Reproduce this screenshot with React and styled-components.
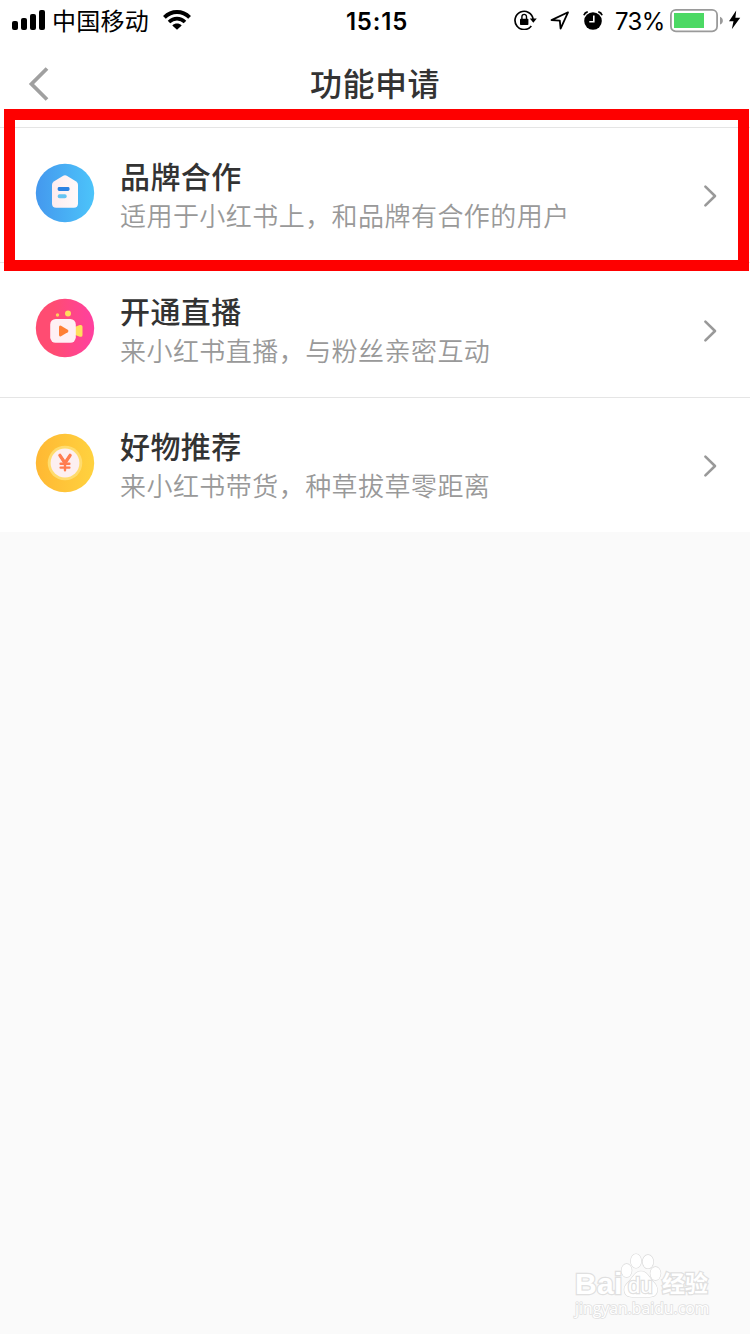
import React from 'react'
import styled, { createGlobalStyle } from 'styled-components'

const features = [
  {
    id: 'brand',
    title: '品牌合作',
    desc: '适用于小红书上，和品牌有合作的用户',
    icon: <BrandIcon />,
  },
  {
    id: 'live',
    title: '开通直播',
    desc: '来小红书直播，与粉丝亲密互动',
    icon: <LiveIcon />,
  },
  {
    id: 'goods',
    title: '好物推荐',
    desc: '来小红书带货，种草拔草零距离',
    icon: <GoodsIcon />,
  },
]

function App() {
  return (
    <Page>
      <GlobalStyle />
      <StatusBar />
      <NavBar>
        <BackButton aria-label='back'>
          <svg width='22' height='36' viewBox='0 0 22 36' fill='none'>
            <path d='M19 2.5L3.5 18L19 33.5' stroke='#a0a0a0' strokeWidth='3.8' />
          </svg>
        </BackButton>
        <NavTitle>功能申请</NavTitle>
      </NavBar>
      <List>
        {features.map((item) => (
          <Row key={item.id}>
            {item.icon}
            <RowText>
              <RowTitle>{item.title}</RowTitle>
              <RowDesc>{item.desc}</RowDesc>
            </RowText>
            <svg width='16' height='24' viewBox='0 0 16 24' fill='none'>
              <path
                d='M3.4 2.6L13 12L3.4 21.4'
                stroke='#999'
                strokeWidth='2.6'
                strokeLinecap='round'
                strokeLinejoin='round'
              />
            </svg>
          </Row>
        ))}
      </List>
      <Highlight />
      <Watermark />
    </Page>
  )
}

export default App

function StatusBar() {
  return (
    <Status>
      <StatusLeft>
        <svg width='33' height='20' viewBox='0 0 33 20'>
          <rect x='0' y='11' width='6' height='9' rx='2' />
          <rect x='9' y='8' width='6' height='12' rx='2' />
          <rect x='18' y='4' width='6' height='16' rx='2' />
          <rect x='27' y='0' width='6' height='20' rx='2' />
        </svg>
        <Carrier>中国移动</Carrier>
        <svg width='28' height='20' viewBox='0 0 28 20' fill='none'>
          <path d='M1.4 7.3C8.6 0.3 19.4 0.3 26.6 7.3' stroke='#000' strokeWidth='3.9' />
          <path d='M6 12C10.7 7.6 17.3 7.6 22 12' stroke='#000' strokeWidth='3.7' />
          <path d='M14 19.8L9.3 15.4C11.9 13 16.1 13 18.7 15.4Z' fill='#000' />
        </svg>
      </StatusLeft>
      <Clock>15:15</Clock>
      <StatusRight>
        <svg width='23' height='20' viewBox='0 0 23 20' fill='none'>
          <path
            d='M17.3 16A9.1 9.1 0 1 1 19.1 9'
            stroke='#000'
            strokeWidth='1.7'
          />
          <path d='M15.8 8.6H22.8L19.3 12.8Z' fill='#000' />
          <rect x='6' y='8.8' width='8.4' height='6.2' rx='0.8' fill='#000' />
          <path d='M7.9 9V6.8A2.3 2.4 0 0 1 12.5 6.8V9' stroke='#000' strokeWidth='1.4' />
        </svg>
        <Location width='20' height='19' viewBox='0 0 20 19' fill='none'>
          <path
            d='M18 1.3L1.5 9.1L9.8 9.7L10.6 17.6Z'
            stroke='#000'
            strokeWidth='1.8'
            strokeLinejoin='round'
          />
        </Location>
        <Alarm width='20' height='19' viewBox='0 0 20 19' fill='none'>
          <circle cx='10' cy='10' r='8.8' fill='#000' />
          <path d='M0.9 4.2C1.5 2.4 2.9 1.1 4.7 0.8' stroke='#000' strokeWidth='1.7' />
          <path d='M19.1 4.2C18.5 2.4 17.1 1.1 15.3 0.8' stroke='#000' strokeWidth='1.7' />
          <path d='M10.8 4.5V10.8H6.3' stroke='#fff' strokeWidth='1.6' />
        </Alarm>
        <Percent>73%</Percent>
        <Battery width='54' height='24' viewBox='0 0 54 24' fill='none'>
          <rect x='0.9' y='0.9' width='46.2' height='21.4' rx='5' stroke='#9a9a9a' strokeWidth='1.8' />
          <rect x='4' y='4' width='30' height='15' fill='#4cd964' />
          <path d='M50 7.7C53.8 9 53.8 14.4 50 15.6Z' fill='#9a9a9a' />
        </Battery>
        <Bolt width='12' height='20' viewBox='0 0 12 20'>
          <path d='M7.2 0.5L0 11.2H4.5L2.8 19.2L11.2 7.8H6.4Z' />
        </Bolt>
      </StatusRight>
    </Status>
  )
}

function BrandIcon() {
  return (
    <svg width='60' height='60' viewBox='0 0 60 60'>
      <defs>
        <linearGradient id='blue'>
          <stop offset='0' stopColor='#4498ee' />
          <stop offset='1' stopColor='#4cc4fa' />
        </linearGradient>
        <linearGradient id='house'>
          <stop offset='0' stopColor='#fdecee' />
          <stop offset='1' stopColor='#fff9fa' />
        </linearGradient>
      </defs>
      <circle cx='30' cy='30' r='29.2' fill='url(#blue)' />
      <path
        d='M27.8 12.9Q30 11.8 32.2 12.9L41.2 18.5Q43 19.7 43 21.8V40.5Q43 44.7 38.8 44.7H21.2Q17 44.7 17 40.5V21.8Q17 19.7 18.8 18.5Z'
        fill='url(#house)'
      />
      <rect x='22.7' y='24' width='11.8' height='4' rx='1.4' fill='#2b82e2' />
      <rect x='22.7' y='31.3' width='9' height='4' rx='1.8' fill='#66c4f2' />
    </svg>
  )
}

function LiveIcon() {
  return (
    <svg width='60' height='60' viewBox='0 0 60 60'>
      <defs>
        <linearGradient id='pink'>
          <stop offset='0.3' stopColor='#ff4c72' />
          <stop offset='1' stopColor='#ff40a0' />
        </linearGradient>
      </defs>
      <circle cx='30' cy='30' r='29.2' fill='url(#pink)' />
      <circle cx='22.5' cy='17' r='1.7' fill='#ffcf5c' />
      <circle cx='33' cy='15.4' r='3' fill='#ffdc5e' />
      <path
        d='M39 29.3L44.8 27Q47.5 26.4 47.5 28.8V37Q47.5 39.4 44.8 38.7L39 36.5Z'
        fill='#ffe05e'
      />
      <rect x='15.2' y='21' width='25.6' height='23.8' rx='5.5' fill='#fff0f4' />
      <path
        d='M24 29.2Q24 27 26 27.8L32.7 31.7Q34.4 33 32.7 34.2L26 38.2Q24 39 24 36.8Z'
        fill='#ff7f35'
      />
    </svg>
  )
}

function GoodsIcon() {
  return (
    <svg width='60' height='60' viewBox='0 0 60 60'>
      <defs>
        <linearGradient id='gold'>
          <stop offset='0' stopColor='#ffb833' />
          <stop offset='1' stopColor='#ffd23f' />
        </linearGradient>
      </defs>
      <circle cx='30' cy='30' r='29.2' fill='url(#gold)' />
      <circle cx='30' cy='30' r='17.3' fill='#ffdc6e' />
      <circle cx='30' cy='30' r='14.4' fill='#fdeff0' />
      <path
        d='M24.9 22.3L30 30L35.1 22.3M30 30V37.3M25.6 30.8H34.4M25.6 34.6H34.4'
        fill='none'
        stroke='#ff7d50'
        strokeWidth='2.4'
        strokeLinecap='round'
        strokeLinejoin='round'
      />
      <path
        d='M24.9 22.3L30 30L35.1 22.3'
        fill='none'
        stroke='#ff7d50'
        strokeWidth='3.2'
        strokeLinecap='round'
      />
    </svg>
  )
}

function Watermark() {
  return (
    <Mark>
      <MarkTop>
        <MarkWord>Bai</MarkWord>
        <Paw>
          <svg width='42' height='46' viewBox='0 0 42 46' fill='#fff' stroke='#d9d9d9' strokeWidth='1.2'>
            <ellipse cx='6.6' cy='17.5' rx='5.1' ry='6.6' />
            <ellipse cx='16' cy='8' rx='5.2' ry='7' />
            <ellipse cx='28' cy='8.7' rx='5.3' ry='6.8' />
            <ellipse cx='35.5' cy='20.5' rx='5.1' ry='6.6' />
            <path d='M21 18.3C15 18.3 13.5 23.5 9.5 28C5.5 32 3.5 34.5 4.6 39C6 44.5 11.5 44 21 44C30 44 35.5 44.5 37 39C38.2 34.5 36 31.5 32.5 28C28.5 23.5 27 18.3 21 18.3Z' />
          </svg>
          <PawText>du</PawText>
        </Paw>
        <MarkCn>经验</MarkCn>
      </MarkTop>
      <MarkUrl>jingyan.baidu.com</MarkUrl>
    </Mark>
  )
}

const GlobalStyle = createGlobalStyle`
  * {
    box-sizing: border-box;
  }
  body {
    margin: 0;
    background: #fafafa;
    font-family: 'Noto Sans CJK SC', sans-serif;
  }
  svg {
    display: block;
    flex-shrink: 0;
  }
`

const Page = styled.div`
  position: relative;
  width: 750px;
  height: 1334px;
  overflow: hidden;
  background: #fafafa;
`

const Status = styled.header`
  display: grid;
  grid-template-columns: 1fr auto 1fr;
  align-items: center;
  height: 40px;
  padding: 0 9px 0 12px;
  background: #fff;
  color: #000;
`

const StatusLeft = styled.div`
  display: flex;
  align-items: center;
`

const StatusRight = styled.div`
  display: flex;
  align-items: center;
  justify-content: flex-end;
`

const Carrier = styled.span`
  margin: 0 14px 0 7px;
  font-size: 24px;
  letter-spacing: 0.25px;
  line-height: 40px;
`

const Clock = styled.span`
  padding: 3px 0 0 1px;
  font-family: Inter, sans-serif;
  font-size: 24px;
  font-weight: 600;
  letter-spacing: 0.8px;
  line-height: 37px;
`

const Location = styled.svg`
  margin: 1px 0 0 13px;
`

const Alarm = styled.svg`
  margin-left: 13px;
`

const Percent = styled.span`
  width: 48px;
  margin: 0 7px 0 12px;
  padding-top: 3px;
  font-family: Inter, sans-serif;
  font-size: 24px;
  letter-spacing: -0.6px;
  line-height: 37px;
  white-space: nowrap;
`

const Battery = styled.svg`
  margin-top: 2px;
`

const Bolt = styled.svg`
  margin-left: 5px;
`

const NavBar = styled.nav`
  display: grid;
  grid-template-columns: 100px 1fr 100px;
  align-items: center;
  height: 88px;
  background: #fff;
  border-bottom: 1px solid #e5e5e5;
`

const BackButton = styled.button`
  margin: 0 0 0 28px;
  padding: 0;
  border: none;
  background: none;
`

const NavTitle = styled.h1`
  margin: 0 0 3px;
  color: #333;
  font-size: 32px;
  font-weight: 500;
  letter-spacing: 0.5px;
  line-height: 48px;
  text-align: center;
`

const List = styled.main`
  background: #fff;
`

const Row = styled.section`
  display: flex;
  align-items: center;
  height: 135px;
  padding: 0 32px 4px 35px;
  border-bottom: 1px solid #e5e5e5;

  &:last-child {
    height: 134px;
    border-bottom: none;
  }
  > svg:last-child {
    margin-top: 5px;
  }
`

const RowText = styled.div`
  flex: 1;
  padding: 3px 0 0 25px;
`

const RowTitle = styled.h2`
  margin: 0;
  color: #333;
  font-size: 30px;
  font-weight: 500;
  letter-spacing: 0.4px;
  line-height: 40px;
`

const RowDesc = styled.p`
  margin: 0;
  color: #999;
  font-size: 26px;
  font-weight: 350;
  letter-spacing: 0.45px;
  line-height: 39px;
`

// red frame over the first row
const Highlight = styled.div`
  position: absolute;
  top: 109px;
  left: 4px;
  width: 745px;
  height: 162px;
  border: 11px solid #fe0000;
`

const Mark = styled.div`
  position: absolute;
  left: 575px;
  bottom: 14px;
  color: #fff;
  -webkit-text-stroke: 2.4px #e0e0e0;
  paint-order: stroke fill;
`

const MarkTop = styled.div`
  display: flex;
  align-items: flex-end;
  height: 46px;
`

const MarkWord = styled.span`
  width: 45px;
  font-family: 'Liberation Sans', sans-serif;
  font-size: 30px;
  font-weight: 700;
  letter-spacing: 0.3px;
  line-height: 30px;
`

const Paw = styled.div`
  position: relative;
`

const PawText = styled.span`
  position: absolute;
  left: 8px;
  bottom: 1px;
  font-family: 'Liberation Sans', sans-serif;
  font-size: 22px;
  line-height: 24px;
`

const MarkCn = styled.span`
  font-size: 23px;
  font-weight: 700;
  line-height: 33px;
`

const MarkUrl = styled.div`
  padding-bottom: 2px;
  font-family: 'Open Sans', sans-serif;
  font-size: 15.8px;
  line-height: 19px;
  -webkit-text-stroke-width: 1.6px;
`
